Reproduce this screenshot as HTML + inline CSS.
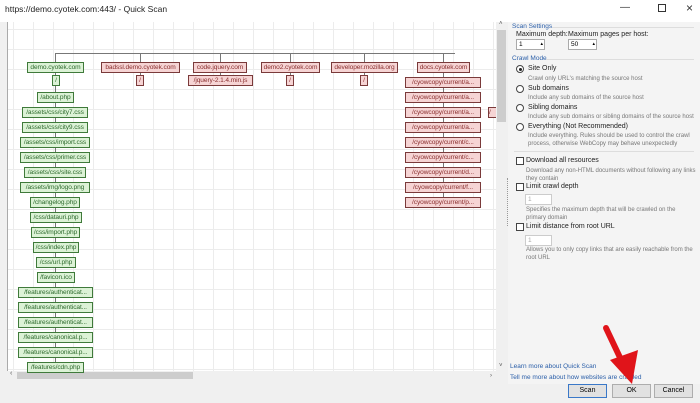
<!DOCTYPE html><html><head><style>
*{margin:0;padding:0;box-sizing:border-box}
body{width:700px;height:403px;overflow:hidden;background:#f0f0f0;font-family:"Liberation Sans",sans-serif;position:relative}
.a{position:absolute;white-space:nowrap}
.g,.r{position:absolute;height:11px;font-size:6.6px;line-height:9px;padding:0 1px;white-space:nowrap;text-align:center;overflow:hidden;letter-spacing:-0.1px}
.g{background:#dcf2d6;border:1px solid #3f7a3a;color:#2d6a2d}
.r{background:#f6d4d4;border:1px solid #7a3a3a;color:#8a2f2f}
.t{font-size:7px;color:#222}
.d{font-size:6px;color:#777}
.h{font-size:6.5px;color:#2a5ea8}
.rad{position:absolute;width:8px;height:8px;border:1px solid #444;border-radius:50%;background:#fff}
.cb{position:absolute;width:8px;height:8px;border:1px solid #444;background:#fff}
.inp{position:absolute;height:11px;border:1px solid #aaa;background:#fff;font-size:6.5px;padding-left:2px;line-height:9px}
.btn{position:absolute;height:14px;border:1px solid #adadad;background:#e1e1e1;font-size:7px;text-align:center;line-height:12px}
.vl{position:absolute;width:1px;background:#777}
</style></head><body>
<div class="a" style="left:0;top:0;width:700px;height:22px;background:#fff"></div>
<div class="a" style="left:5px;top:4px;font-size:8.5px;color:#222">https://demo.cyotek.com:443/ - Quick Scan</div>
<div class="a" style="left:620px;top:2px;font-size:10px;color:#333">—</div>
<div class="a" style="left:658px;top:4px;width:8px;height:8px;border:1px solid #333"></div>
<div class="a" style="left:686px;top:1px;font-size:12px;color:#333">×</div>
<div class="a" style="left:7px;top:22px;width:490px;height:349px;background-color:#fff;background-image:linear-gradient(#ececec 1px,transparent 1px),linear-gradient(90deg,#ececec 1px,transparent 1px);background-size:20px 20px;background-position:5px 7px;border-left:1px solid #aaa"></div>
<div class="a" style="left:7px;top:371px;width:490px;height:9px;background:#f0f0f0"></div>
<div class="a" style="left:17px;top:372px;width:176px;height:7px;background:#cdcdcd"></div>
<div class="a" style="left:10px;top:370px;font-size:7px;color:#555">‹</div>
<div class="a" style="left:496px;top:22px;width:12px;height:349px;background:#f0f0f0"></div>
<div class="a" style="left:497px;top:30px;width:9px;height:92px;background:#cdcdcd"></div>
<div class="a" style="left:499px;top:21px;font-size:6px;color:#555">˄</div>
<div class="a" style="left:55px;top:53px;width:400px;height:1px;background:#777"></div>
<div class="vl" style="left:55px;top:53px;height:315px"></div>
<div class="vl" style="left:140px;top:53px;height:30px"></div>
<div class="vl" style="left:220px;top:53px;height:30px"></div>
<div class="vl" style="left:290px;top:53px;height:30px"></div>
<div class="vl" style="left:364px;top:53px;height:30px"></div>
<div class="vl" style="left:443px;top:53px;height:150px"></div>
<div class="g" style="left:27px;top:62px;width:57px">demo.cyotek.com</div>
<div class="g" style="left:52px;top:75px;width:8px;padding:0">/</div>
<div class="g" style="left:37px;top:92px;width:37px">/about.php</div>
<div class="g" style="left:22px;top:107px;width:66px">/assets/css/city7.css</div>
<div class="g" style="left:22px;top:122px;width:66px">/assets/css/city9.css</div>
<div class="g" style="left:20px;top:137px;width:70px">/assets/css/import.css</div>
<div class="g" style="left:20px;top:152px;width:70px">/assets/css/primer.css</div>
<div class="g" style="left:24px;top:167px;width:62px">/assets/css/site.css</div>
<div class="g" style="left:20px;top:182px;width:70px">/assets/img/logo.png</div>
<div class="g" style="left:30px;top:197px;width:50px">/changelog.php</div>
<div class="g" style="left:30px;top:212px;width:52px">/css/datauri.php</div>
<div class="g" style="left:31px;top:227px;width:49px">/css/import.php</div>
<div class="g" style="left:33px;top:242px;width:46px">/css/index.php</div>
<div class="g" style="left:36px;top:257px;width:40px">/css/url.php</div>
<div class="g" style="left:37px;top:272px;width:38px">/favicon.ico</div>
<div class="g" style="left:18px;top:287px;width:75px">/features/authenticat...</div>
<div class="g" style="left:18px;top:302px;width:75px">/features/authenticat...</div>
<div class="g" style="left:18px;top:317px;width:75px">/features/authenticat...</div>
<div class="g" style="left:18px;top:332px;width:75px">/features/canonical.p...</div>
<div class="g" style="left:18px;top:347px;width:75px">/features/canonical.p...</div>
<div class="g" style="left:27px;top:362px;width:57px">/features/cdn.php</div>
<div class="r" style="left:101px;top:62px;width:79px">badssl.demo.cyotek.com</div>
<div class="r" style="left:136px;top:75px;width:8px;padding:0">/</div>
<div class="r" style="left:193px;top:62px;width:54px">code.jquery.com</div>
<div class="r" style="left:188px;top:75px;width:65px">/jquery-2.1.4.min.js</div>
<div class="r" style="left:261px;top:62px;width:59px">demo2.cyotek.com</div>
<div class="r" style="left:286px;top:75px;width:8px;padding:0">/</div>
<div class="r" style="left:331px;top:62px;width:67px">developer.mozilla.org</div>
<div class="r" style="left:360px;top:75px;width:8px;padding:0">/</div>
<div class="r" style="left:417px;top:62px;width:53px">docs.cyotek.com</div>
<div class="r" style="left:405px;top:77px;width:76px">/cyowcopy/current/a...</div>
<div class="r" style="left:405px;top:92px;width:76px">/cyowcopy/current/a...</div>
<div class="r" style="left:405px;top:107px;width:76px">/cyowcopy/current/a...</div>
<div class="r" style="left:488px;top:107px;width:8px;padding:0;text-align:left;border-right:none">/</div>
<div class="r" style="left:405px;top:122px;width:76px">/cyowcopy/current/a...</div>
<div class="r" style="left:405px;top:137px;width:76px">/cyowcopy/current/c...</div>
<div class="r" style="left:405px;top:152px;width:76px">/cyowcopy/current/c...</div>
<div class="r" style="left:405px;top:167px;width:76px">/cyowcopy/current/d...</div>
<div class="r" style="left:405px;top:182px;width:76px">/cyowcopy/current/f...</div>
<div class="r" style="left:405px;top:197px;width:76px">/cyowcopy/current/p...</div>
<div class="a" style="left:508px;top:22px;width:192px;height:362px;background:#f4f4f4"></div>
<div class="a h" style="left:512px;top:23px">Scan Settings</div>
<div class="a" style="left:552px;top:27px;width:142px;height:1px;background:#ddd"></div>
<div class="a t" style="left:516px;top:31px">Maximum depth:</div>
<div class="a t" style="left:568px;top:31px">Maximum pages per host:</div>
<div class="inp" style="left:516px;top:39px;width:29px">1<span style="position:absolute;right:1px;top:0;font-size:5px">▴</span></div>
<div class="inp" style="left:568px;top:39px;width:29px">50<span style="position:absolute;right:1px;top:0;font-size:5px">▴</span></div>
<div class="a h" style="left:512px;top:55px">Crawl Mode</div>
<div class="a" style="left:546px;top:59px;width:148px;height:1px;background:#ddd"></div>
<div class="rad" style="left:516px;top:65px"><div style="position:absolute;left:2px;top:2px;width:3px;height:3px;border-radius:50%;background:#222"></div></div>
<div class="a t" style="left:528px;top:65px">Site Only</div>
<div class="a d" style="left:528px;top:76px">Crawl only URL's matching the source host</div>
<div class="rad" style="left:516px;top:85px"></div>
<div class="a t" style="left:528px;top:85px">Sub domains</div>
<div class="a d" style="left:528px;top:95px">Include any sub domains of the source host</div>
<div class="rad" style="left:516px;top:104px"></div>
<div class="a t" style="left:528px;top:104px">Sibling domains</div>
<div class="a d" style="left:528px;top:114px">Include any sub domains or sibling domains of the source host</div>
<div class="rad" style="left:516px;top:123px"></div>
<div class="a t" style="left:528px;top:123px">Everything (Not Recommended)</div>
<div class="a d" style="left:528px;top:133px">Include everything. Rules should be used to control the crawl</div>
<div class="a d" style="left:528px;top:141px">process, otherwise WebCopy may behave unexpectedly</div>
<div class="a" style="left:514px;top:151px;width:180px;height:1px;background:#ddd"></div>
<div class="cb" style="left:516px;top:157px"></div>
<div class="a t" style="left:526px;top:157px">Download all resources</div>
<div class="a d" style="left:526px;top:168px">Download any non-HTML documents without following any links</div>
<div class="a d" style="left:526px;top:176px">they contain</div>
<div class="a" style="left:507px;top:178px;width:1px;height:48px;border-left:1px dotted #999"></div>
<div class="cb" style="left:516px;top:183px"></div>
<div class="a t" style="left:526px;top:183px">Limit crawl depth</div>
<div class="inp" style="left:525px;top:194px;width:27px;color:#aaa;border-color:#ccc">1</div>
<div class="a d" style="left:526px;top:207px">Specifies the maximum depth that will be crawled on the</div>
<div class="a d" style="left:526px;top:215px">primary domain</div>
<div class="cb" style="left:516px;top:223px"></div>
<div class="a t" style="left:526px;top:223px">Limit distance from root URL</div>
<div class="inp" style="left:525px;top:235px;width:27px;color:#aaa;border-color:#ccc">1</div>
<div class="a d" style="left:526px;top:247px">Allows you to only copy links that are easily reachable from the</div>
<div class="a d" style="left:526px;top:255px">root URL</div>
<div class="a" style="left:499px;top:363px;font-size:6px;color:#555">˅</div>
<div class="a" style="left:490px;top:373px;font-size:6px;color:#555">›</div>
<div class="a h" style="left:510px;top:363px">Learn more about Quick Scan</div>
<div class="a h" style="left:510px;top:374px">Tell me more about how websites are crawled</div>
<div class="btn" style="left:568px;top:384px;width:39px;border-color:#3a78c8">Scan</div>
<div class="btn" style="left:612px;top:384px;width:39px">OK</div>
<div class="btn" style="left:654px;top:384px;width:39px">Cancel</div>
<svg class="a" style="left:590px;top:320px" width="60" height="70"><line x1="16" y1="8" x2="34" y2="46" stroke="#e0141a" stroke-width="6" stroke-linecap="round"/><polygon points="20,40 48,30 42,64" fill="#e0141a"/></svg>
</body></html>
